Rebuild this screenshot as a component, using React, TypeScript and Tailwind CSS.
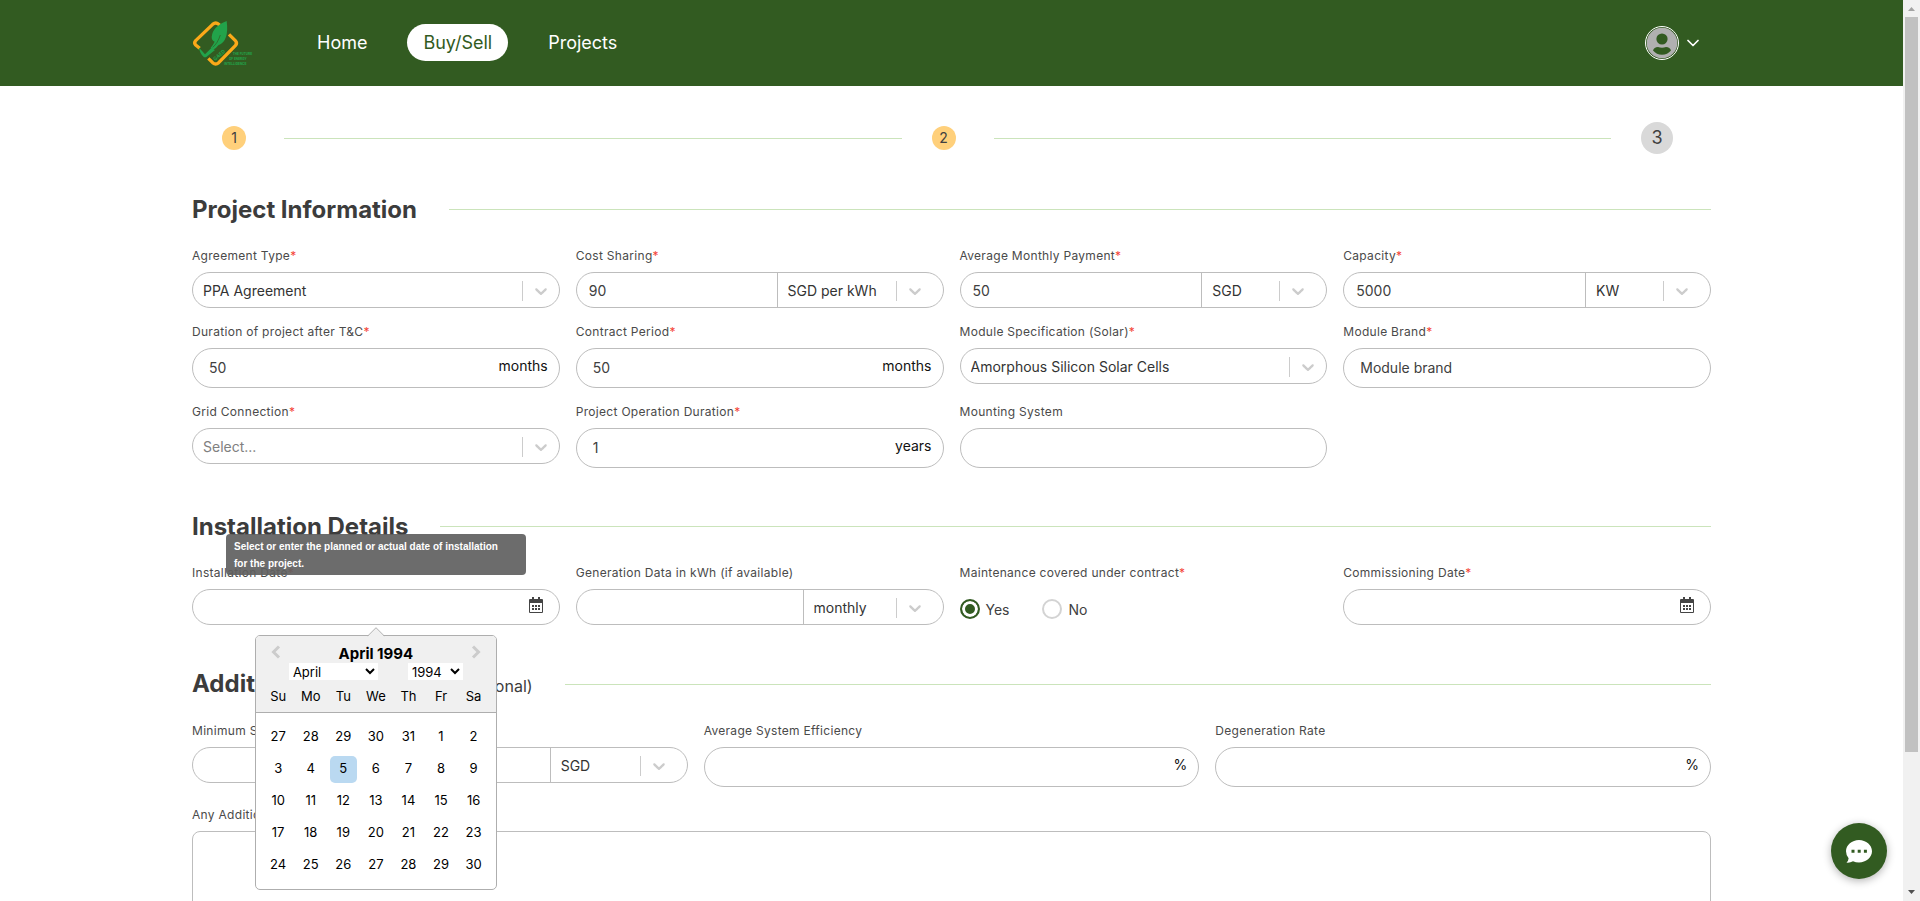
import { useId, type ReactNode } from "react";

const FONT = "font-['Inter',sans-serif]";

function Label({ htmlFor, text, required }: { htmlFor?: string; text: string; required?: boolean }) {
  return (
    <label htmlFor={htmlFor} className="mb-[6px] block h-5 text-[12px] leading-5 tracking-wide whitespace-nowrap text-[#4a4a4a]">
      {text}
      {required && <span className="text-[#f44336]">*</span>}
    </label>
  );
}

function SelectBox({ id, label, value, wide, placeholder }: { id: string; label?: string; value: string; wide?: boolean; placeholder?: boolean }) {
  return (
    <div className="relative h-full w-full">
      <select
        id={id}
        aria-label={label}
        defaultValue={value}
        className={`h-full w-full appearance-none bg-transparent pt-px pl-[10px] text-[14px] outline-none ${placeholder ? "text-[#808080]" : "text-[#333333]"}`}
      >
        <option>{value}</option>
      </select>
      <span className={`pointer-events-none absolute inset-y-0 flex items-center pt-[2px] ${wide ? "right-2" : "right-[18px]"}`}>
        <span className="h-5 w-px bg-[#cccccc]" />
        <svg viewBox="0 0 20 20" className="ml-2 h-5 w-5 fill-[#cccccc]" aria-hidden="true">
          <path d="M4.516 7.548c0.436-0.446 1.043-0.481 1.576 0l3.908 3.747 3.908-3.747c0.533-0.481 1.141-0.446 1.574 0 0.436 0.445 0.408 1.197 0 1.615-0.406 0.418-4.695 4.502-4.695 4.502-0.217 0.223-0.502 0.335-0.787 0.335s-0.57-0.112-0.789-0.335c0 0-4.287-4.084-4.695-4.502s-0.436-1.17 0-1.615z" />
        </svg>
      </span>
    </div>
  );
}

function SelectField({ label, value, placeholder }: { label: string; value: string; placeholder?: boolean }) {
  const id = useId();
  return (
    <div>
      <Label htmlFor={id} text={label} required />
      <div className="h-9 rounded-[18px] border border-[#bdbdbd] bg-white">
        <SelectBox id={id} value={value} wide placeholder={placeholder} />
      </div>
    </div>
  );
}

function AmountField({ label, value, unit, required, unitWidth }: { label: string; value: string; unit: string; required?: boolean; unitWidth: string }) {
  const id = useId();
  return (
    <div>
      <Label htmlFor={id} text={label} required={required} />
      <div className="flex h-9 rounded-[18px] border border-[#bdbdbd] bg-white">
        <input id={id} defaultValue={value} className="min-w-0 flex-1 rounded-l-[18px] pl-3 text-[14px] text-[#404040] outline-none" />
        <div className={`border-l border-[#bdbdbd] ${unitWidth}`}>
          <SelectBox id={`${id}-unit`} label={`${label} unit`} value={unit} />
        </div>
      </div>
    </div>
  );
}

function TextField({ label, value, suffix, required }: { label: string; value?: string; suffix?: string; required?: boolean }) {
  const id = useId();
  return (
    <div>
      <Label htmlFor={id} text={label} required={required} />
      <div className="flex h-10 rounded-[20px] border border-[#bdbdbd] bg-white">
        <input id={id} defaultValue={value} className="min-w-0 flex-1 rounded-[20px] pb-[2px] pl-4 text-[14px] text-[#404040] outline-none" />
        {suffix && <span className="pr-[11px] text-[14px] leading-[33px] text-[#111111]">{suffix}</span>}
      </div>
    </div>
  );
}

function CalendarIcon() {
  return (
    <svg viewBox="0 0 14 16" className="h-4 w-[14px]" fill="#444444" aria-hidden="true">
      <path fillRule="evenodd" d="M3 0h2v2h4V0h2v2h2a1 1 0 0 1 1 1v12a1 1 0 0 1-1 1H1a1 1 0 0 1-1-1V3a1 1 0 0 1 1-1h2zM1 6v9h12V6z" />
      <path d="M3 8h2v2H3zM6 8h2v2H6zM9 8h2v2H9zM3 11h2v2H3zM6 11h2v2H6zM9 11h2v2H9z" />
    </svg>
  );
}

function DateField({ label, children }: { label: string; children?: ReactNode }) {
  const id = useId();
  return (
    <div className="relative">
      <Label htmlFor={id} text={label} required />
      <div className="flex h-9 rounded-[18px] border border-[#bdbdbd] bg-white">
        <input id={id} className="min-w-0 flex-1 rounded-[18px] pl-4 text-[14px] outline-none" />
        <button type="button" aria-label="Open calendar" className="mr-4 h-[30px]">
          <CalendarIcon />
        </button>
      </div>
      {children}
    </div>
  );
}

const WEEKDAYS = ["Su", "Mo", "Tu", "We", "Th", "Fr", "Sa"];
const DAYS = [27, 28, 29, 30, 31, ...Array.from({ length: 30 }, (_, i) => i + 1)];

function DatePicker() {
  return (
    <div className="absolute inset-x-0 top-full z-20 flex justify-center pt-[10px]">
      <div className="relative w-[242px] rounded-[5px] border border-[#aeaeae] bg-white text-[13px] text-black">
        <svg viewBox="0 0 18 10" className="absolute -top-[9px] left-[111px] h-[10px] w-[18px]" aria-hidden="true">
          <path d="M0 10L9 1l9 9z" fill="#f0f0f0" />
          <path d="M0.500 9.200L9 0.700l8.500 8.500" fill="none" stroke="#aeaeae" />
        </svg>
        <div className="rounded-t-[4px] border-b border-[#aeaeae] bg-[#f0f0f0] px-[6px] pt-2">
          <div className="flex h-[19px] items-center justify-between px-[9px]">
            <button type="button" aria-label="Previous month">
              <svg viewBox="0 0 10 14" className="mb-[3px] h-[14px] w-[10px]" fill="none" stroke="#cccccc" strokeWidth="3" aria-hidden="true">
                <path d="M8 1.500L2.500 7 8 12.500" />
              </svg>
            </button>
            <strong className="pt-[2px] text-[15px] font-bold">April 1994</strong>
            <button type="button" aria-label="Next month">
              <svg viewBox="0 0 10 14" className="mb-[3px] h-[14px] w-[10px]" fill="none" stroke="#cccccc" strokeWidth="3" aria-hidden="true">
                <path d="M2 1.500L7.500 7 2 12.500" />
              </svg>
            </button>
          </div>
          <div className="flex gap-[30px] pl-[27px]">
            <select aria-label="Month" defaultValue="April" className="h-[17px] w-[89px] bg-white text-[13px]">
              <option>April</option>
            </select>
            <select aria-label="Year" defaultValue="1994" className="h-[17px] w-[55px] bg-white text-[13px]">
              <option>1994</option>
            </select>
          </div>
          <div className="grid h-8 grid-cols-7 items-center pt-[2px] text-center">
            {WEEKDAYS.map((d) => (
              <span key={d}>{d}</span>
            ))}
          </div>
        </div>
        <div className="grid grid-cols-7 justify-items-center px-[6px] pt-2 pb-2">
          {DAYS.map((d, i) => (
            <div key={i} className="flex h-8 items-center">
              <button type="button" className={`h-[27px] w-[27px] rounded-[5px] ${i === 9 ? "bg-[#bad9f1]" : ""}`}>
                {d}
              </button>
            </div>
          ))}
        </div>
      </div>
    </div>
  );
}

function SectionTitle({ title, note }: { title: string; note?: string }) {
  return (
    <div className="mb-[21px] flex h-8 items-center gap-8">
      <h2 className="pt-[2px] text-[24px] leading-8 font-bold whitespace-nowrap text-[#3c3c3c]">
        {title}
        {note && <span className="text-[16px] font-normal"> {note}</span>}
      </h2>
      <span className="h-px flex-1 bg-[#cbe4bb]" />
    </div>
  );
}

function StepLine() {
  return <li aria-hidden="true" className="mr-[30px] ml-[38px] h-px flex-1 bg-[#cbe4bb]" />;
}

function Logo() {
  return (
    <svg viewBox="36 30 183 138" className="h-[46px] w-[61px] overflow-visible" aria-label="GAED" role="img">
      <g fill="none" stroke="#fba919" strokeWidth="10" strokeLinejoin="round">
        <path d="M59 115L47 105Q41 99 47 92L98 43Q107 35 115 42L121 47" />
        <path d="M147 73L166 92Q173 99 166 107L116 158Q107 166 98 158L85 145" />
      </g>
      <path d="M56 112L75 133 94 114 105 120 78 142H72Q60 132 56 112z" fill="#22a34a" />
      <path d="M140 33Q97 50 95 81 95 92 104 95 99 106 92 113L99 119Q110 114 115 106 148 94 140 33z" fill="#22a34a" />
      <path d="M98 112Q113 100 121 75" fill="none" stroke="#325b21" strokeWidth="2" />
      <g fill="#22a34a" className="font-['Liberation_Sans_Narrow','Roboto',sans-serif] font-bold">
        <text x="106" y="153" fontSize="16" transform="rotate(-42 106 153)">GAED</text>
        <g fontSize="10">
          <text x="158" y="136">THE FUTURE</text>
          <text x="147" y="150">OF ENERGY</text>
          <text x="132" y="164">INTELLIGENCE</text>
        </g>
      </g>
    </svg>
  );
}

function Header() {
  return (
    <header className="flex h-[86px] items-center bg-[#325b21] px-48 text-white">
      <a href="#home" className="mr-12">
        <Logo />
      </a>
      <nav className="flex gap-6 pb-[2px] text-[18px]">
        <a href="#home" className="rounded-full px-4 leading-[37px]">Home</a>
        <a href="#buy-sell" className="rounded-full bg-white px-4 leading-[37px] text-[#325b21]">Buy/Sell</a>
        <a href="#projects" className="rounded-full px-4 leading-[37px]">Projects</a>
      </nav>
      <button type="button" aria-label="Account menu" className="mr-3 ml-auto flex items-center gap-2">
        <svg viewBox="0 0 34 34" className="h-[34px] w-[34px]" aria-hidden="true">
          <circle cx="17" cy="17" r="16.500" fill="none" stroke="#ffffff" />
          <circle cx="17" cy="17" r="15.300" fill="#b0b0b0" />
          <circle cx="17" cy="13" r="5.600" fill="#325b21" />
          <path d="M8 24.500Q9 21 13 21Q17 22.300 21 21Q25 21 26 24.500Q22.500 28.700 17 28.700T8 24.500z" fill="#325b21" />
        </svg>
        <svg viewBox="0 0 12 8" className="h-2 w-3" fill="none" stroke="#ffffff" strokeWidth="1.700" strokeLinecap="round" strokeLinejoin="round" aria-hidden="true">
          <path d="M1 1.500l5 5 5-5" />
        </svg>
      </button>
    </header>
  );
}

function Radio({ label, checked }: { label: string; checked?: boolean }) {
  return (
    <label className="flex items-center gap-[6px] text-[14px] text-[#404040]">
      <input
        type="radio"
        name="maintenance"
        defaultChecked={checked}
        className="h-5 w-5 appearance-none rounded-full border-2 border-[#d3d3d3] checked:border-[#325b21] checked:bg-[#325b21] checked:shadow-[inset_0_0_0_3px_white]"
      />
      {label}
    </label>
  );
}

function ScrollTrack() {
  return (
    <div aria-hidden="true" className="flex w-[17px] shrink-0 flex-col items-center bg-[#f1f1f1]">
      <svg viewBox="0 0 17 17" className="h-[17px] w-[17px] shrink-0">
        <path d="M5 11l3.500-4 3.500 4z" fill="#a3a3a3" />
      </svg>
      <div className="w-[13px] grow-[735] bg-[#c1c1c1]" />
      <div className="grow-[132]" />
      <svg viewBox="0 0 17 17" className="h-[17px] w-[17px] shrink-0">
        <path d="M5 6l3.500 4L12 6z" fill="#505050" />
      </svg>
    </div>
  );
}

export default function App() {
  return (
    <div className={`flex h-screen overflow-hidden bg-white ${FONT}`}>
      <div className="relative min-w-0 flex-1 overflow-hidden">
        <Header />
        <main className="px-48">
          <ol className="mt-9 flex h-8 items-center pr-[38px] pl-[30px] text-[#404040]">
            <li className="h-6 w-6 rounded-full bg-[#ffd07b] text-center text-[14px] leading-6">1</li>
            <StepLine />
            <li className="h-6 w-6 rounded-full bg-[#ffd07b] text-center text-[14px] leading-6">2</li>
            <StepLine />
            <li className="h-8 w-8 rounded-full bg-[#d9d9d9] text-center text-[18px] leading-8">3</li>
          </ol>

          <section className="mt-[39px]">
            <SectionTitle title="Project Information" />
            <div className="grid grid-cols-4 gap-x-4 gap-y-[14px]">
              <SelectField label="Agreement Type" value="PPA Agreement" />
              <AmountField label="Cost Sharing" value="90" unit="SGD per kWh" required unitWidth="w-[166px]" />
              <AmountField label="Average Monthly Payment" value="50" unit="SGD" required unitWidth="w-[125px]" />
              <AmountField label="Capacity" value="5000" unit="KW" required unitWidth="w-[125px]" />
              <TextField label="Duration of project after T&C" value="50" suffix="months" required />
              <TextField label="Contract Period" value="50" suffix="months" required />
              <SelectField label="Module Specification (Solar)" value="Amorphous Silicon Solar Cells" />
              <TextField label="Module Brand" value="Module brand" required />
              <SelectField label="Grid Connection" value="Select..." placeholder />
              <TextField label="Project Operation Duration" value="1" suffix="years" required />
              <TextField label="Mounting System" />
            </div>
          </section>

          <section className="mt-[42px]">
            <SectionTitle title="Installation Details" />
            <div className="grid grid-cols-4 items-start gap-x-4">
              <DateField label="Installation Date">
                <div role="tooltip" className="absolute -top-[29px] left-[34px] z-10 w-[300px] rounded-[4px] bg-[#5f5f5f]/92 pt-1 pr-5 pb-[3px] pl-2 font-['Liberation_Sans',sans-serif] text-[10px] leading-[17px] font-bold text-white">
                  Select or enter the planned or actual date of installation for the project.
                </div>
                <DatePicker />
              </DateField>
              <AmountField label="Generation Data in kWh (if available)" value="" unit="monthly" unitWidth="w-[140px]" />
              <fieldset>
                <Label text="Maintenance covered under contract" required />
                <div className="flex h-10 items-center gap-[33px]">
                  <Radio label="Yes" checked />
                  <Radio label="No" />
                </div>
              </fieldset>
              <DateField label="Commissioning Date" />
            </div>
          </section>

          <section className="mt-[39px]">
            <SectionTitle title="Additional Information" note="(Optional)" />
            <div className="grid grid-cols-3 gap-x-4">
              <AmountField label="Minimum System Price" value="" unit="SGD" unitWidth="w-[137px]" />
              <TextField label="Average System Efficiency" suffix="%" />
              <TextField label="Degeneration Rate" suffix="%" />
            </div>
            <div className="mt-[18px]">
              <Label htmlFor="notes" text="Any Additional Information" />
              <textarea id="notes" className="block h-40 w-full resize-none rounded-lg border border-[#bdbdbd] p-4 text-[14px] outline-none" />
            </div>
          </section>
        </main>
        <button type="button" aria-label="Chat" className="absolute right-4 bottom-[22px] flex h-14 w-14 items-center justify-center rounded-full bg-[#325b21] shadow-[0_2px_8px_rgba(0,0,0,0.3)]">
          <svg viewBox="0 0 26 23" className="h-[23px] w-[26px]" aria-hidden="true">
            <path d="M13 0C20 0 26 5 26 11.200S20 22.400 13 22.400Q9.800 22.400 7 21.200 4 23 0.500 22.600 2.500 20.500 2.600 18.200 0 15 0 11.200C0 5 6 0 13 0z" fill="#ffffff" />
            <path d="M5.500 9.700h3v3h-3zM11.700 9.700h3v3h-3zM17.900 9.700h3v3h-3z" fill="#325b21" />
          </svg>
        </button>
      </div>
      <ScrollTrack />
    </div>
  );
}
